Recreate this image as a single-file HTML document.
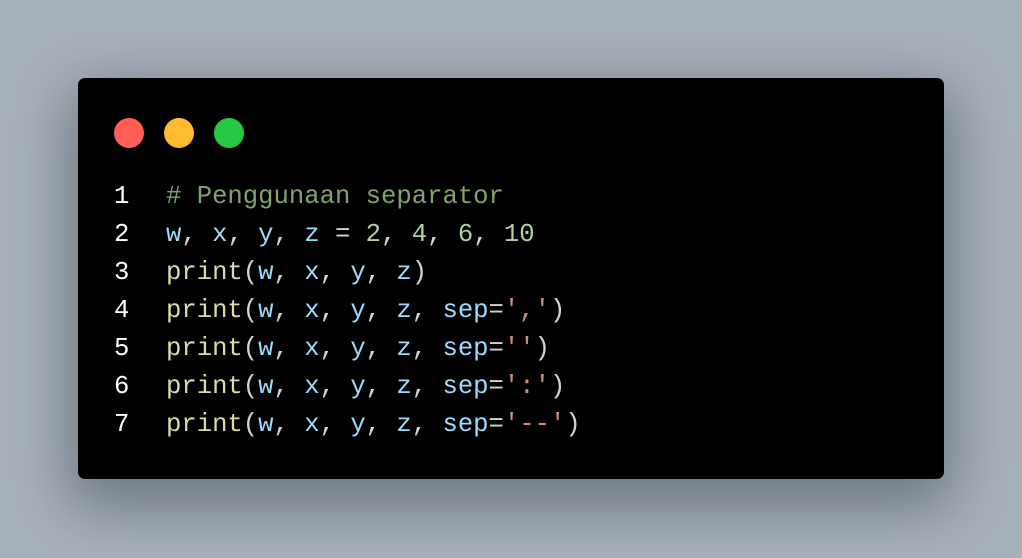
<!DOCTYPE html>
<html><head><meta charset="utf-8"><style>
html,body{margin:0;padding:0}
body{width:1022px;height:558px;background:#a8b2bc;position:relative;overflow:hidden}
.card{position:absolute;left:78px;top:78px;width:866px;height:401px;background:#000;border-radius:7px;box-shadow:0 20px 60px 10px rgba(40,50,60,.45)}
.dot{position:absolute;top:40px;width:30px;height:30px;border-radius:50%}
.code{position:absolute;left:0;top:100px;width:866px;height:300px;font-family:"Liberation Mono",monospace;font-size:25.6px;line-height:38px;white-space:pre;color:#d4d4d4}
.ln{position:absolute;left:36px;top:0;color:#fff}
.tx{position:absolute;left:88px;top:0}
.c{color:#7fa56c}.v{color:#9cdcfe}.n{color:#b5cea8}.f{color:#dcdcaa}.s{color:#ce9178}
</style></head><body>
<div class="card">
<div class="dot" style="left:36px;background:#ff5f57"></div>
<div class="dot" style="left:86px;background:#febc2e"></div>
<div class="dot" style="left:136px;background:#28c840"></div>
<div class="code"><div class="ln">1
2
3
4
5
6
7</div><div class="tx"><span class="c"># Penggunaan separator</span>
<span class="v">w</span>, <span class="v">x</span>, <span class="v">y</span>, <span class="v">z</span> = <span class="n">2</span>, <span class="n">4</span>, <span class="n">6</span>, <span class="n">10</span>
<span class="f">print</span>(<span class="v">w</span>, <span class="v">x</span>, <span class="v">y</span>, <span class="v">z</span>)
<span class="f">print</span>(<span class="v">w</span>, <span class="v">x</span>, <span class="v">y</span>, <span class="v">z</span>, <span class="v">sep</span>=<span class="s">','</span>)
<span class="f">print</span>(<span class="v">w</span>, <span class="v">x</span>, <span class="v">y</span>, <span class="v">z</span>, <span class="v">sep</span>=<span class="s">''</span>)
<span class="f">print</span>(<span class="v">w</span>, <span class="v">x</span>, <span class="v">y</span>, <span class="v">z</span>, <span class="v">sep</span>=<span class="s">':'</span>)
<span class="f">print</span>(<span class="v">w</span>, <span class="v">x</span>, <span class="v">y</span>, <span class="v">z</span>, <span class="v">sep</span>=<span class="s">'--'</span>)</div></div>
</div>
</body></html>
